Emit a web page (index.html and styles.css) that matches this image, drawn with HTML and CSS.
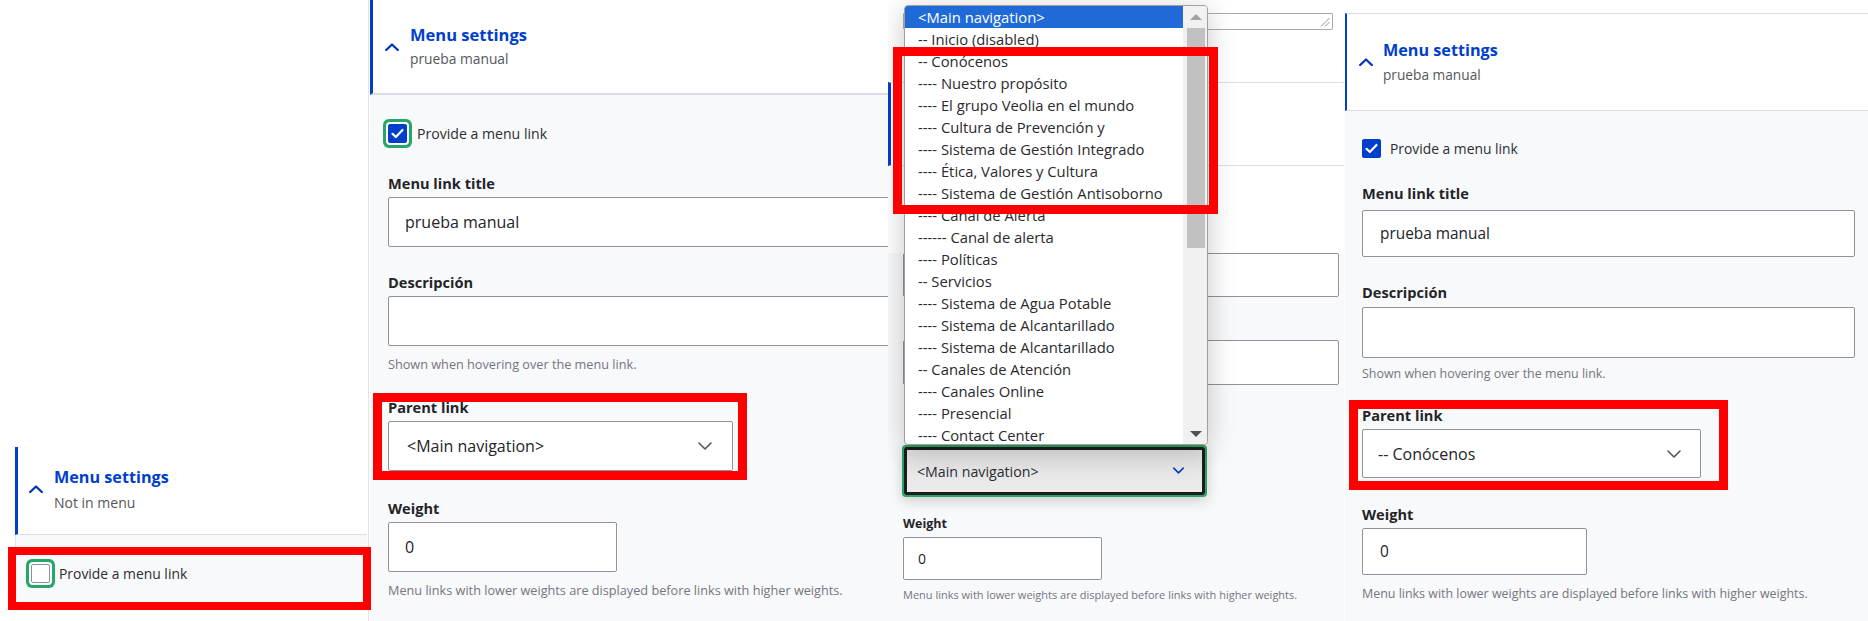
FILE: index.html
```html
<!DOCTYPE html>
<html lang="es">
<head>
<meta charset="utf-8">
<title>Menu settings</title>
<link rel="stylesheet" href="styles.css">
</head>
<body>
<div class="canvas">

  <section class="panel p1">
    <div class="card">
      <div class="summary">
        <svg class="chev" viewBox="0 0 14 8"><path d="M1.2 7 L7 1.5 L12.8 7"/></svg>
        <div class="stext"><div class="stitle">Menu settings</div><div class="ssub">Not in menu</div></div>
      </div>
      <div class="dbody">
        <div class="check"><span class="box ring"></span><span class="clabel">Provide a menu link</span></div>
      </div>
    </div>
  </section>

  <section class="panel p2">
    <div class="card">
      <div class="summary">
        <svg class="chev" viewBox="0 0 14 8"><path d="M1.2 7 L7 1.5 L12.8 7"/></svg>
        <div class="stext"><div class="stitle">Menu settings</div><div class="ssub">prueba manual</div></div>
      </div>
      <div class="dbody">
        <div class="check"><span class="box on ring"><svg viewBox="0 0 19 19"><path d="M4.5 9.8 L7.8 13 L14.5 6"/></svg></span><span class="clabel">Provide a menu link</span></div>
        <div class="field first"><div class="flabel">Menu link title</div><div class="input wide">prueba manual</div></div>
        <div class="field"><div class="flabel">Descripción</div><div class="input wide"></div><div class="help">Shown when hovering over the menu link.</div></div>
        <div class="field"><div class="flabel">Parent link</div><div class="input select">&lt;Main navigation&gt;<svg class="schev" viewBox="0 0 14 8"><path d="M1 1 L7 7 L13 1"/></svg></div></div>
        <div class="field wfield"><div class="flabel">Weight</div><div class="input weight">0</div><div class="help">Menu links with lower weights are displayed before links with higher weights.</div></div>
      </div>
    </div>
  </section>

  <section class="panel p3">
    <div class="ta"><svg class="grip" viewBox="0 0 10 10"><path d="M9.5 1 L1 9.5 M9.5 5 L5 9.5"/></svg></div>
    <div class="card">
      <div class="summary"></div>
      <div class="dbody">
        <div class="input ghost a"></div>
        <div class="input ghost b"></div>
        <div class="select-open">&lt;Main navigation&gt;<svg class="schev blue" viewBox="0 0 14 8"><path d="M1 1 L7 7 L13 1"/></svg></div>
        <div class="flabel">Weight</div>
        <div class="input weight">0</div>
        <div class="help">Menu links with lower weights are displayed before links with higher weights.</div>
      </div>
    </div>
    <div class="popup">
      <div class="opts">
        <div class="opt sel">&lt;Main navigation&gt;</div>
        <div class="opt">-- Inicio (disabled)</div>
        <div class="opt">-- Conócenos</div>
        <div class="opt">---- Nuestro propósito</div>
        <div class="opt">---- El grupo Veolia en el mundo</div>
        <div class="opt">---- Cultura de Prevención y</div>
        <div class="opt">---- Sistema de Gestión Integrado</div>
        <div class="opt">---- Ética, Valores y Cultura</div>
        <div class="opt">---- Sistema de Gestión Antisoborno</div>
        <div class="opt">---- Canal de Alerta</div>
        <div class="opt">------ Canal de alerta</div>
        <div class="opt">---- Políticas</div>
        <div class="opt">-- Servicios</div>
        <div class="opt">---- Sistema de Agua Potable</div>
        <div class="opt">---- Sistema de Alcantarillado</div>
        <div class="opt">---- Sistema de Alcantarillado</div>
        <div class="opt">-- Canales de Atención</div>
        <div class="opt">---- Canales Online</div>
        <div class="opt">---- Presencial</div>
        <div class="opt">---- Contact Center</div>
      </div>
      <div class="sbar"><span class="arr up"></span><span class="thumb"></span><span class="arr down"></span></div>
    </div>
  </section>

  <section class="panel p4">
    <div class="card">
      <div class="summary">
        <svg class="chev" viewBox="0 0 14 8"><path d="M1.2 7 L7 1.5 L12.8 7"/></svg>
        <div class="stext"><div class="stitle">Menu settings</div><div class="ssub">prueba manual</div></div>
      </div>
      <div class="dbody">
        <div class="check"><span class="box on"><svg viewBox="0 0 19 19"><path d="M4.5 9.8 L7.8 13 L14.5 6"/></svg></span><span class="clabel">Provide a menu link</span></div>
        <div class="field first"><div class="flabel">Menu link title</div><div class="input wide">prueba manual</div></div>
        <div class="field dfield"><div class="flabel">Descripción</div><div class="input wide tall"></div><div class="help">Shown when hovering over the menu link.</div></div>
        <div class="field pfield"><div class="flabel">Parent link</div><div class="input select">-- Conócenos<svg class="schev" viewBox="0 0 14 8"><path d="M1 1 L7 7 L13 1"/></svg></div></div>
        <div class="field wfield"><div class="flabel">Weight</div><div class="input weight">0</div><div class="help">Menu links with lower weights are displayed before links with higher weights.</div></div>
      </div>
    </div>
  </section>

  <div class="mark m1"></div>
  <div class="mark m2"></div>
  <div class="mark m3"></div>
  <div class="mark m4"></div>
</div>
</body>
</html>
```

FILE: styles.css
```css
* { box-sizing: border-box; margin: 0; padding: 0; }
html, body { width: 1868px; height: 621px; overflow: hidden; background: #fff; }
body { font-family: "Open Sans", "Noto Sans", sans-serif; color: #232429; }

.canvas { position: relative; display: flex; width: 1868px; height: 621px; overflow: hidden; }
.panel { position: relative; height: 621px; flex: none; overflow: hidden; }

/* shared components */
.summary { display: flex; align-items: center; background: #fff; border-left: 3px solid #003ecc; border-bottom: 1px solid #dcdde2; }
.chev { flex: none; width: 14px; height: 8px; fill: none; stroke: #0036b1; stroke-width: 2.3; stroke-linecap: round; stroke-linejoin: round; }
.stitle { font-weight: 700; color: #003ecc; line-height: 20px; white-space: nowrap; }
.ssub { color: #55565b; line-height: 18px; white-space: nowrap; }
.dbody { background: #f8f9fa; }
.check { display: flex; align-items: center; }
.box { flex: none; display: block; width: 19px; height: 19px; border: 1px solid #8e929c; border-radius: 2px; background: #fff; }
.box.on { background: #003ecc; border-color: #003ecc; }
.box svg { display: block; margin: -1px; width: 19px; height: 19px; fill: none; stroke: #fff; stroke-width: 2.2; stroke-linecap: round; stroke-linejoin: round; }
.ring { box-shadow: 0 0 0 2px #fff, 0 0 0 5px #26a769; }
.clabel { margin-left: 10px; white-space: nowrap; color: #2c2d33; }
.flabel { font-weight: 700; line-height: 20px; white-space: nowrap; color: #232429; }
.input { display: flex; align-items: center; border: 1px solid #8e929c; border-radius: 2px; background: #fff; color: #232429; white-space: nowrap; position: relative; }
.help { color: #75757f; line-height: 16px; white-space: nowrap; }
.schev { position: absolute; top: 50%; width: 14px; height: 8px; margin-top: -4px; fill: none; stroke: #545560; stroke-width: 1.6; stroke-linecap: round; stroke-linejoin: round; }
.schev.blue { stroke: #003ecc; stroke-width: 2; width: 11px; height: 7px; }

/* panel 1 */
.p1 { width: 369px; padding: 447px 1px 0 15px; border-right: 1px solid #e3e4e8; }
.p1 .summary { height: 88px; padding: 0 0 3px 11px; gap: 11px; }
.p1 .stitle { font-size: 16.2px; }
.p1 .ssub { font-size: 14px; margin-top: 7px; }
.p1 .dbody { height: 70px; padding: 29px 0 0 15px; border-left: 1px solid #e3e4e8; }
.p1 .clabel { font-size: 13.9px; margin-left: 9px; }

/* panel 2 */
.p2 { width: 519px; padding-left: 1px; }
.p2 .summary { height: 95px; border-bottom-width: 2px; padding-left: 12px; gap: 11px; }
.p2 .stitle { font-size: 16.5px; }
.p2 .ssub { font-size: 13.8px; margin-top: 5px; }
.p2 .dbody { height: 526px; padding: 29px 0 0 18px; }
.p2 .clabel { font-size: 14.1px; }
.p2 .field { margin-top: 25px; }
.p2 .field.first { margin-top: 30px; }
.p2 .field.wfield { margin-top: 27px; }
.p2 .flabel { font-size: 14.6px; margin-bottom: 4px; }
.p2 .input { height: 50px; font-size: 16px; padding-left: 16px; }
.p2 .input.wide { width: 540px; }
.p2 .input.select { width: 345px; padding-left: 18px; }
.p2 .input.select .schev { right: 20px; }
.p2 .input.weight { width: 229px; }
.p2 .help { font-size: 12.7px; margin-top: 10px; }

/* panel 3 (open dropdown) */
.p3 { width: 456px; }
.p3 .ta { position: relative; height: 17px; margin: 13px 11px 0 15px; border: 1px solid #a9aab0; border-radius: 0 0 2px 2px; background: #fff; }
.p3 .grip { position: absolute; right: 2px; bottom: 2px; width: 10px; height: 10px; fill: none; stroke: #8e929c; stroke-width: 1; }
.p3 .card { margin-top: 52px; }
.p3 .summary { height: 84px; border-top: 1px solid #dcdde2; }
.p3 .dbody { height: 456px; padding: 0 0 0 15px; }
.p3 .input.ghost { width: 436px; }
.p3 .input.a { margin-top: 87px; height: 44px; }
.p3 .input.b { margin-top: 43px; height: 45px; }
.p3 .select-open { position: relative; display: flex; align-items: center; width: 305px; height: 52px; margin: 60px 0 0 -1px; padding-left: 13px; border: 2px solid #2aa360; border-radius: 4px; box-shadow: inset 0 0 0 3px #1d1d1f, 0 4px 14px rgba(0,0,0,0.18); background: linear-gradient(#e2e2e2, #ececec); font-size: 14.2px; color: #2c2d33; white-space: nowrap; }
.p3 .select-open .schev { right: 21px; }
.p3 .flabel { font-size: 12.5px; line-height: 16px; margin-top: 19px; }
.p3 .input.weight { width: 199px; height: 43px; margin-top: 5px; font-size: 14px; padding-left: 14px; }
.p3 .help { font-size: 11px; line-height: 14px; margin-top: 8px; }

.popup { position: absolute; left: 16px; top: 5px; width: 304px; height: 440px; display: flex; background: #fff; border: 1px solid #a0a0a0; border-radius: 4px; box-shadow: 0 6px 28px rgba(0,0,0,0.22); overflow: hidden; }
.opts { width: 278px; flex: none; }
.opt { height: 22px; line-height: 22px; padding-left: 13px; font-size: 14.8px; color: #2a2a2e; white-space: nowrap; }
.opt.sel { background: #1f6ad6; color: #fff; }
.sbar { position: relative; flex: 1; background: #f1f1f1; }
.thumb { position: absolute; left: 4px; top: 22px; width: 18px; height: 220px; background: #c1c1c1; }
.arr { position: absolute; left: 7px; width: 0; height: 0; border-left: 6px solid transparent; border-right: 6px solid transparent; }
.arr.up { top: 8px; border-bottom: 6px solid #a3a3a3; }
.arr.down { bottom: 7px; border-top: 6px solid #505050; }

/* panel 4 */
.p4 { flex: 1; padding: 13px 0 0 1px; }
.p4 .summary { height: 98px; border-left-width: 2px; border-top: 1px solid #dcdde2; padding: 0 0 0 12px; gap: 10px; }
.p4 .stitle { font-size: 16.2px; }
.p4 .ssub { font-size: 13.7px; margin-top: 6px; }
.p4 .dbody { height: 510px; padding: 28px 0 0 17px; }
.p4 .clabel { font-size: 13.85px; margin-left: 9px; }
.p4 .field.first { margin-top: 25px; }
.p4 .field.first .flabel { margin-bottom: 7px; }
.p4 .field.dfield { margin-top: 25px; }
.p4 .field.dfield .flabel { margin-bottom: 5px; }
.p4 .field.pfield { margin-top: 23px; }
.p4 .field.pfield .flabel { margin-bottom: 4px; }
.p4 .field.wfield { margin-top: 26px; }
.p4 .field.wfield .flabel { margin-bottom: 4px; }
.p4 .flabel { font-size: 14.6px; }
.p4 .input { font-size: 15.4px; padding-left: 17px; }
.p4 .input.wide { width: 493px; height: 47px; }
.p4 .input.wide.tall { height: 51px; }
.p4 .input.select { width: 339px; height: 49px; padding-left: 15px; font-size: 16px; }
.p4 .input.select .schev { right: 19px; }
.p4 .input.weight { width: 225px; height: 47px; }
.p4 .help { font-size: 12.45px; margin-top: 8px; }
.p4 .wfield .help { margin-top: 11px; }

/* red annotation frames */
.mark { position: absolute; border: 9px solid #ff0000; pointer-events: none; }
.m1 { left: 8px; top: 547px; width: 363px; height: 63px; border-width: 8px; }
.m2 { left: 373px; top: 393px; width: 374px; height: 87px; }
.m3 { left: 893px; top: 47px; width: 325px; height: 167px; }
.m4 { left: 1349px; top: 400px; width: 379px; height: 90px; }
```
